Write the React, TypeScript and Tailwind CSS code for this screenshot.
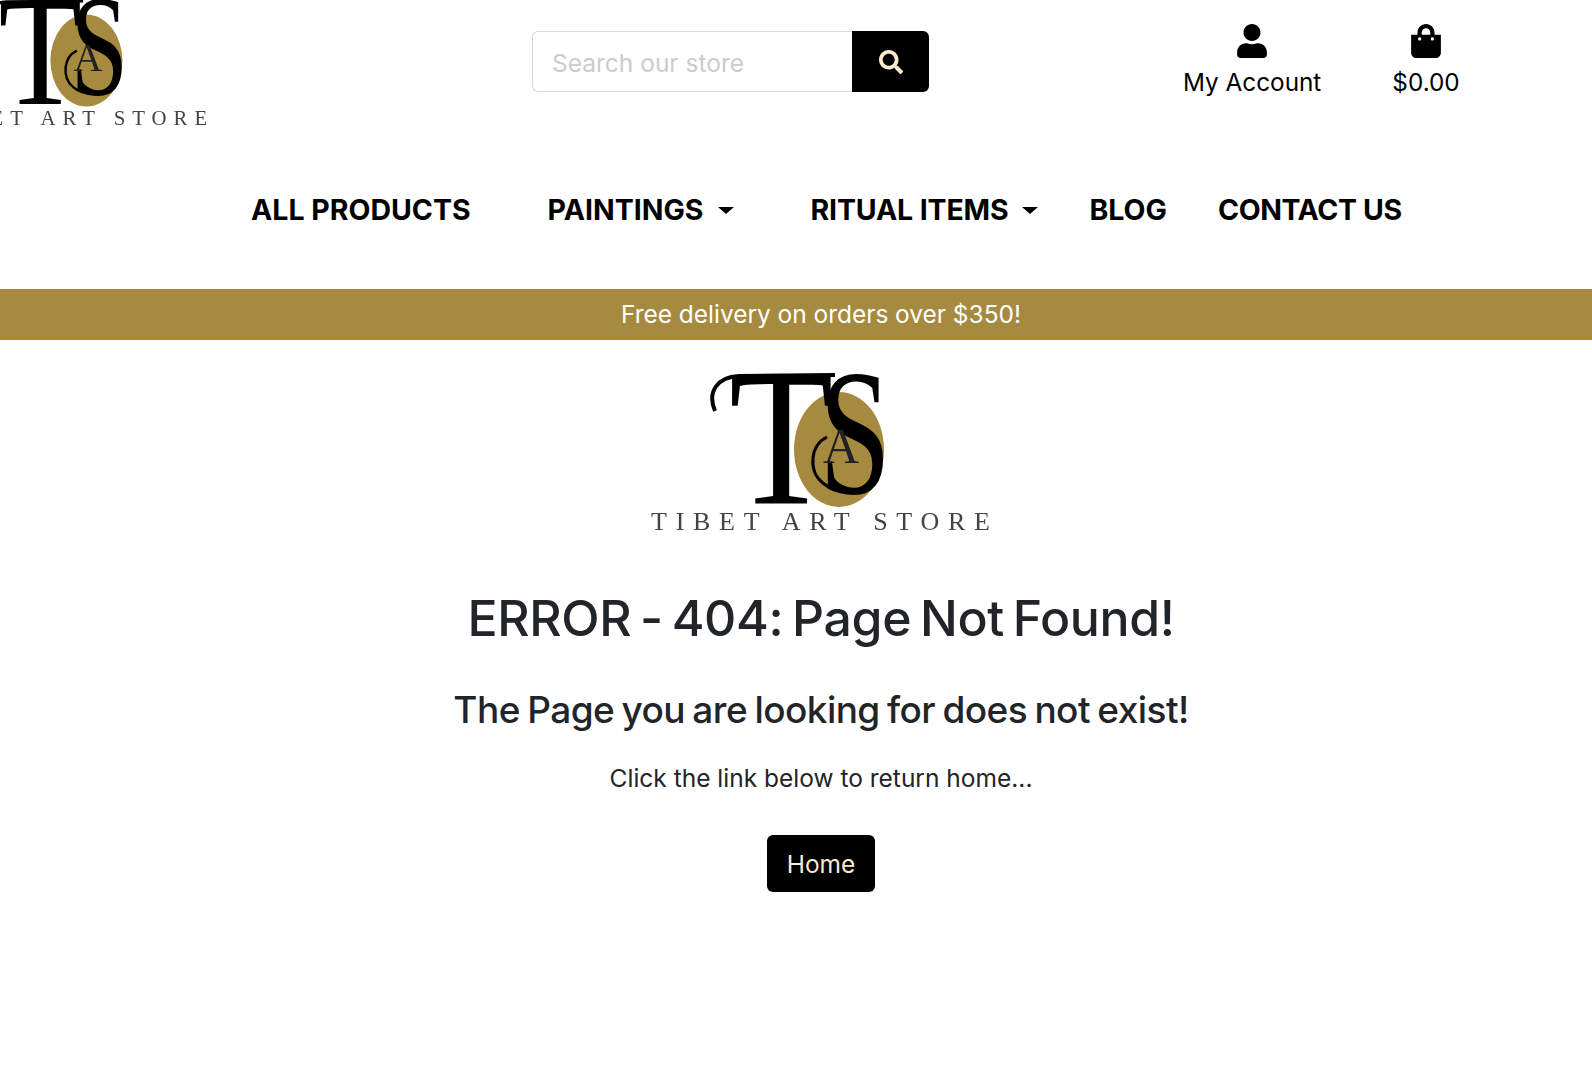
import { FaUser, FaShoppingBag, FaSearch } from "react-icons/fa";

function Logo({ className }: { className: string }) {
  return (
    <svg viewBox="0 0 380 200" className={className}>
      <ellipse cx="208" cy="99.5" rx="45" ry="57.5" fill="#a68a3f" />
      <text x="0" y="0" transform="translate(98 154) scale(0.9 1.03)" fontFamily="'Liberation Serif', serif" fontSize="190" fill="#000">T</text>
      <path d="M84 61C76 42 86 27 108 26L204 25" fill="none" stroke="#000" strokeWidth="4" />
      <text x="0" y="0" transform="translate(188 143) scale(0.72 1)" fontFamily="'Liberation Serif', serif" fontSize="180" fill="#000">S</text>
      <text x="192" y="113" fontFamily="'Liberation Serif', serif" fontSize="50" fill="#222">A</text>
      <path d="M224 140C196 144 180 128 182 108C183 98 188 91 196 87" fill="none" stroke="#000" strokeWidth="3" />
      <text x="20" y="180" textLength="339" fontFamily="'Liberation Serif', serif" fontSize="26" fill="#444">TIBET ART STORE</text>
    </svg>
  );
}

function Caret() {
  return <span className="ml-[14px] mt-[1px] w-0 h-0 border-x-[8px] border-x-transparent border-t-[7px] border-t-black" />;
}

export default function App() {
  return (
    <div className="h-[1066px] overflow-hidden bg-white font-['Inter',sans-serif] text-[#212529]">
      <header className="h-[164px] flex items-start">
        <div className="w-[532px] shrink-0 h-[130px] overflow-hidden">
          <Logo className="w-[304px] h-[160px] ml-[-80px] mt-[-19px] max-w-none blur-[0.4px]" />
        </div>
        <div className="flex mt-[31px] h-[61px] w-[397px] shrink-0">
          <div className="flex-1 flex items-center pl-[19px] pt-[3px] border border-[#d5dbe1] border-r-0 rounded-l-[6px] text-[24.5px] text-[#cccccc]">
            Search our store
          </div>
          <div className="w-[77px] bg-black rounded-r-[6px] flex items-center justify-center">
            <FaSearch className="text-[#fbe9d0] text-[24px]" />
          </div>
        </div>
        <div className="flex mt-[24px] ml-[254px] text-black text-[24.3px] gap-[71px]">
          <div className="flex flex-col items-center">
            <FaUser className="text-[34px]" />
            <span className="mt-[4px] leading-[40px]">My Account</span>
          </div>
          <div className="flex flex-col items-center">
            <FaShoppingBag className="text-[34px]" />
            <span className="mt-[4px] leading-[40px]">$0.00</span>
          </div>
        </div>
      </header>
      <nav className="h-[125px] pl-[251px] pt-[23px] flex items-start text-black font-bold text-[28.5px] leading-[46px]">
        <span>ALL PRODUCTS</span>
        <span className="ml-[77px] flex items-center">PAINTINGS<Caret /></span>
        <span className="ml-[77px] flex items-center tracking-[-0.15px]">RITUAL ITEMS<Caret /></span>
        <span className="ml-[51px]">BLOG</span>
        <span className="ml-[51px] tracking-[-0.4px]">CONTACT US</span>
      </nav>
      <div className="h-[51px] bg-[#a68a3f] pl-[50px] flex items-center justify-center text-white text-[24.5px] [word-spacing:-0.2px]">
        Free delivery on orders over $350!
      </div>
      <main className="pl-[50px] flex flex-col items-center">
        <Logo className="w-[380px] h-[200px] mt-[10px] blur-[0.4px]" />
        <h1 className="mt-[38px] text-[50px] font-[550] leading-[60px] tracking-[-0.4px] [word-spacing:-4px]">ERROR - 404: Page Not Found!</h1>
        <h2 className="mt-[39px] text-[37px] font-[550] leading-[46px] tracking-[-0.55px] [word-spacing:-2px]">The Page you are looking for does not exist!</h2>
        <p className="mt-[27px] text-[24.5px] leading-[36px]">Click the link below to return home...</p>
        <div className="mt-[39px] w-[108px] h-[57px] bg-black text-[#fbe9d0] rounded-[6px] flex items-center justify-center text-[24.5px] pt-[1px]">
          Home
        </div>
      </main>
    </div>
  );
}
